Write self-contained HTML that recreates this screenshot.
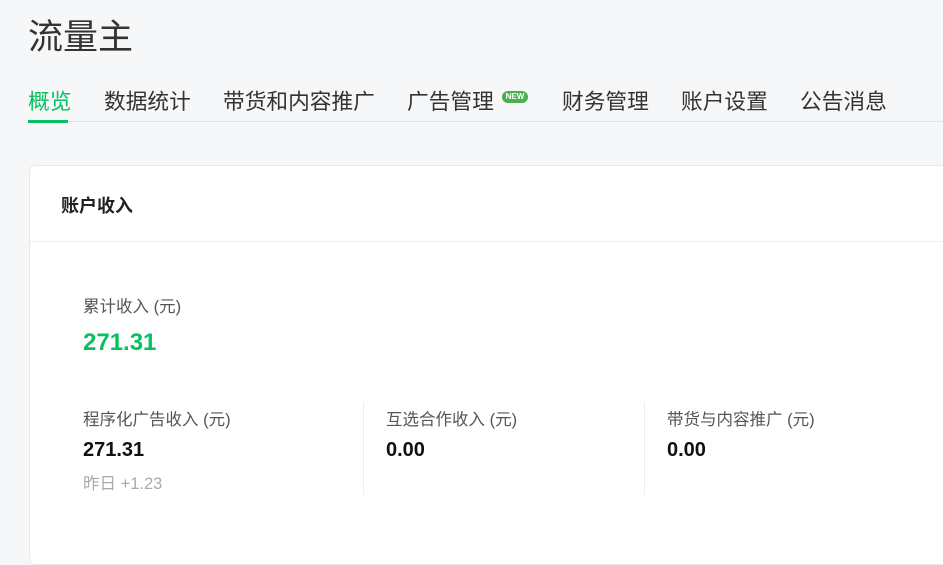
<!DOCTYPE html><html><head><meta charset="utf-8"><style>
*{margin:0;padding:0;box-sizing:border-box}
body{width:943px;height:539px;overflow:hidden;background:#f6f7f9;font-family:"Liberation Sans","Noto Sans CJK SC",sans-serif;position:relative;color:#333}
.a{position:absolute;white-space:nowrap;line-height:1}
.nav{font-size:21.7px;color:#333;top:91px}
.lbl{font-size:16.5px;color:#555}
.val{font-size:20px;font-weight:bold;color:#111}
</style></head><body>
<div class="a" style="left:28px;top:20px;font-size:35px;color:#333">流量主</div>
<div class="a nav" style="left:28px;color:#07c160">概览</div>
<div class="a nav" style="left:104px">数据统计</div>
<div class="a nav" style="left:223px">带货和内容推广</div>
<div class="a nav" style="left:407px">广告管理</div>
<div class="a" style="left:502px;top:91px;width:26px;height:12px;border-radius:6px;background:#4caf50;color:#fff;font-size:8px;font-weight:bold;text-align:center;line-height:12px">NEW</div>
<div class="a nav" style="left:562px">财务管理</div>
<div class="a nav" style="left:681px">账户设置</div>
<div class="a nav" style="left:800px">公告消息</div>
<div class="a" style="left:28px;top:121px;width:915px;height:1px;background:#e2e3e5"></div>
<div class="a" style="left:28px;top:120px;width:40px;height:3px;background:#07c160"></div>
<div class="a" style="left:29px;top:165px;width:930px;height:400px;background:#fff;border:1px solid #e8e9eb;border-radius:6px"></div>
<div class="a" style="left:61px;top:197px;font-size:18px;font-weight:bold;color:#222">账户收入</div>
<div class="a" style="left:30px;top:241px;width:913px;height:1px;background:#eeeeee"></div>
<div class="a lbl" style="left:83px;top:299px">累计收入 (元)</div>
<div class="a" style="left:83px;top:331px;font-size:24px;font-weight:bold;color:#07c160">271.31</div>
<div class="a lbl" style="left:83px;top:412px">程序化广告收入 (元)</div>
<div class="a val" style="left:83px;top:440px">271.31</div>
<div class="a" style="left:83px;top:476px;font-size:16.5px;color:#aaa">昨日 +1.23</div>
<div class="a" style="left:363px;top:402px;width:1px;height:93px;background:#eee"></div>
<div class="a lbl" style="left:386px;top:412px">互选合作收入 (元)</div>
<div class="a val" style="left:386px;top:440px">0.00</div>
<div class="a" style="left:644px;top:402px;width:1px;height:93px;background:#eee"></div>
<div class="a lbl" style="left:667px;top:412px">带货与内容推广 (元)</div>
<div class="a val" style="left:667px;top:440px">0.00</div>
</body></html>
